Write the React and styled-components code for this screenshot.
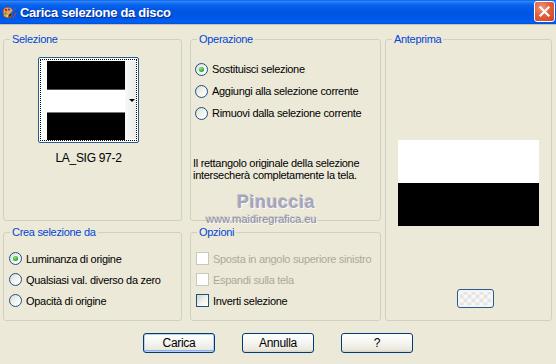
import React from "react";
import styled, { createGlobalStyle } from "styled-components";

const Global = createGlobalStyle`
  html, body { margin: 0; padding: 0; background: #ece9d8; }
  body { font-family: "Liberation Sans", Arial, sans-serif; font-size: 11px; color: #000; }
  * { box-sizing: border-box; }
`;

const Window = styled.div`
  width: 556px;
  height: 364px;
  overflow: hidden;
  background: #ece9d8;
  display: flex;
  flex-direction: column;
`;

const TitleBar = styled.div`
  height: 25px;
  flex: none;
  display: flex;
  align-items: center;
  padding: 0 1px 0 1px;
  background: linear-gradient(
    to bottom,
    #0a5fe9 0%,
    #2f86f8 6%,
    #1a73f4 12%,
    #0760ea 22%,
    #0158e4 40%,
    #0055e2 60%,
    #0057e8 78%,
    #0060f2 90%,
    #0052d8 100%
  );
  border-bottom: 1px solid #c8c4b4;
`;

const AppIcon = styled.svg`
  width: 16px;
  height: 16px;
  flex: none;
  margin-top: 1px;
`;

const Title = styled.div`
  margin-left: 3px;
  flex: 1;
  color: #fff;
  font-family: "Liberation Sans", Arial, sans-serif;
  font-weight: bold;
  font-size: 13px;
  letter-spacing: -0.3px;
  text-shadow: 1px 1px 0 #0a2a8a;
`;

const CloseBtn = styled.div`
  width: 21px;
  height: 21px;
  flex: none;
  border: 1px solid #fff;
  border-radius: 3px;
  background: radial-gradient(circle at 35% 30%, #f0957a 0%, #e3603c 45%, #cc4420 100%);
  display: flex;
  align-items: center;
  justify-content: center;
  margin-top: -1px;
`;

const Body = styled.div`
  flex: 1;
  padding: 8px 0 0 3px;
  display: flex;
  flex-direction: column;
`;

const Groups = styled.div`
  display: grid;
  grid-template-columns: 179px 8px 191px 4px 167px;
  grid-template-rows: 188px 95px;
  row-gap: 5px;
  grid-template-areas:
    "sel . op . prev"
    "crea . opz . prev";
`;

const Group = styled.fieldset`
  grid-area: ${(p) => p.$area};
  margin: 0;
  padding: 0;
  min-width: 0;
  border: 1px solid #d0d0bf;
  border-radius: 3px;
  position: relative;
  display: flex;
  flex-direction: column;
`;

const Legend = styled.legend`
  margin-left: 6px;
  padding: 0 2px;
  color: #0046d5;
  font-size: 11px;
  line-height: 13px;
  letter-spacing: -0.3px;
`;

const SelContent = styled.div`
  padding: 11px 0 0 34px;
  display: flex;
  flex-direction: column;
  align-items: flex-start;
`;

const Thumb = styled.div`
  width: 101px;
  height: 86px;
  border: 1px solid #2a5a8e;
  border-radius: 2px;
  background: #fff;
  padding: 1px;
  display: flex;
`;

const Dotted = styled.div`
  flex: 1;
  border: 1px dotted #000;
  display: flex;
  padding: 1px 0 1px 6px;
`;

const Bars = styled.div`
  width: 78px;
  display: flex;
  flex-direction: column;
`;

const Bar = styled.div`
  height: ${(p) => p.$h}px;
  background: ${(p) => p.$c};
  flex: none;
`;

const DropStrip = styled.div`
  flex: 1;
  background: linear-gradient(to right, #f8f8f8, #ececec);
  display: flex;
  align-items: center;
  justify-content: flex-end;
  padding-right: 1px;
`;

const Arrow = styled.div`
  width: 0;
  height: 0;
  border-left: 3px solid transparent;
  border-right: 3px solid transparent;
  border-top: 3px solid #000;
`;

const ThumbLabel = styled.div`
  width: 101px;
  margin-top: 9px;
  text-align: center;
  font-size: 12px;
  line-height: 13px;
  letter-spacing: -0.3px;
`;

const OptList = styled.div`
  padding: ${(p) => p.$pt}px 0 0 ${(p) => p.$pl}px;
  display: flex;
  flex-direction: column;
`;

const OptRow = styled.div`
  height: ${(p) => p.$h}px;
  display: flex;
  align-items: center;
  gap: 4px;
  letter-spacing: -0.3px;
  color: ${(p) => (p.$disabled ? "#aca899" : "#000")};
  white-space: nowrap;
`;

const Radio = styled.span`
  width: 13px;
  height: 13px;
  flex: none;
  border-radius: 50%;
  border: 1px solid #1c5180;
  background: linear-gradient(135deg, #dcdcd5 0%, #f4f4f0 55%, #ffffff 100%);
  display: flex;
  align-items: center;
  justify-content: center;
  &::after {
    content: "";
    display: ${(p) => (p.$checked ? "block" : "none")};
    width: 5px;
    height: 5px;
    border-radius: 50%;
    background: radial-gradient(circle at 40% 35%, #8de88d 0%, #2fb52f 55%, #1a8a1a 100%);
  }
`;

const Check = styled.span`
  width: 13px;
  height: 13px;
  flex: none;
  border: 1px solid ${(p) => (p.$disabled ? "#cac8bb" : "#1c5180")};
  background: ${(p) =>
    p.$disabled ? "#fff" : "linear-gradient(135deg, #d4d4cc 0%, #f2f2ee 55%, #ffffff 100%)"};
`;

const Desc = styled.div`
  margin-top: 33px;
  padding-left: 2px;
  line-height: 12px;
  letter-spacing: -0.3px;
`;

const Watermark = styled.div`
  position: absolute;
  left: ${(p) => p.$x}px;
  top: ${(p) => p.$y}px;
  font-family: "Liberation Sans", Arial, sans-serif;
  font-size: ${(p) => p.$size}px;
  font-weight: ${(p) => p.$weight};
  line-height: 1.1;
  color: ${(p) => p.$color};
  letter-spacing: ${(p) => p.$ls}px;
  text-shadow: 1px 1px 0 rgba(255, 255, 255, 0.8), -1px -1px 0 rgba(120, 120, 150, 0.35);
  pointer-events: none;
  white-space: nowrap;
`;

const PrevContent = styled.div`
  display: flex;
  flex-direction: column;
  align-items: center;
  padding-top: 94px;
`;

const Preview = styled.div`
  width: 141px;
  height: 86px;
  display: flex;
  flex-direction: column;
`;

const PatternBtn = styled.div`
  margin-top: 63px;
  margin-left: 14px;
  width: 37px;
  height: 19px;
  border: 1px solid #2a5a8e;
  border-radius: 3px;
  background:
    repeating-conic-gradient(#e4e4e4 0% 25%, #f8f8f8 0% 50%) 50% / 8px 8px;
  box-shadow: inset 0 0 0 2px #f4f4f0;
`;

const ButtonRow = styled.div`
  margin-top: 12px;
  margin-left: -3px;
  display: flex;
  justify-content: center;
  gap: 27px;
`;

const Button = styled.div`
  width: 72px;
  height: 20px;
  border: 1px solid #003c74;
  border-radius: 3px;
  background: linear-gradient(to bottom, #ffffff 0%, #f4f4f0 50%, #ebe9e0 85%, #d8d4c8 100%);
  box-shadow: ${(p) => (p.$default ? "inset 0 0 0 1px #b6cff4, inset 0 -1px 0 1px #8fb0e8" : "none")};
  display: flex;
  align-items: center;
  justify-content: center;
  font-size: 12px;
  letter-spacing: -0.3px;
`;

function PaletteIcon() {
  return (
    <AppIcon viewBox="0 0 16 16">
      <path d="M2 6 C2 2.5 6 1.5 9 2.5 C12 3.5 12.5 6 11 7.5 C10 8.5 11.5 9.5 10.5 11 C9 13.5 3.5 13.5 2.5 10.5 C2 9 2 7.5 2 6 Z" fill="#e0a060" stroke="#8a4a1a" strokeWidth="0.8" />
      <circle cx="5" cy="5" r="1.2" fill="#d02020" />
      <circle cx="8" cy="4.5" r="1.1" fill="#2050e0" />
      <circle cx="4.5" cy="8.5" r="1.1" fill="#30a030" />
      <circle cx="6.5" cy="11" r="1" fill="#f0e020" />
      <path d="M9 10 L14.5 3.5" stroke="#3060c0" strokeWidth="1.6" strokeLinecap="round" />
      <path d="M8.2 11 L9.5 9.6" stroke="#402010" strokeWidth="1.8" strokeLinecap="round" />
      <path d="M12 13 L15 8" stroke="#c04040" strokeWidth="1.2" strokeLinecap="round" />
    </AppIcon>
  );
}

function RadioOpt({ checked, children, h }) {
  return (
    <OptRow $h={h}>
      <Radio $checked={checked} />
      <span>{children}</span>
    </OptRow>
  );
}

function CheckOpt({ disabled, children, h }) {
  return (
    <OptRow $h={h} $disabled={disabled}>
      <Check $disabled={disabled} />
      <span>{children}</span>
    </OptRow>
  );
}

export default function App() {
  return (
    <>
      <Global />
      <Window>
        <TitleBar>
          <PaletteIcon />
          <Title>Carica selezione da disco</Title>
          <CloseBtn>
            <svg width="13" height="13" viewBox="0 0 13 13">
              <path d="M2.5 2.5 L10.5 10.5 M10.5 2.5 L2.5 10.5" stroke="#fff" strokeWidth="2.2" strokeLinecap="square" />
            </svg>
          </CloseBtn>
        </TitleBar>
        <Body>
          <Groups>
            <Group $area="sel">
              <Legend>Selezione</Legend>
              <SelContent>
                <Thumb>
                  <Dotted>
                    <Bars>
                      <Bar $h={28} $c="#000" />
                      <Bar $h={1} $c="#555" />
                      <Bar $h={22} $c="#fff" />
                      <Bar $h={1} $c="#777" />
                      <Bar $h={27} $c="#000" />
                    </Bars>
                    <DropStrip>
                      <Arrow />
                    </DropStrip>
                  </Dotted>
                </Thumb>
                <ThumbLabel>LA_SIG 97-2</ThumbLabel>
              </SelContent>
            </Group>

            <Group $area="op">
              <Legend>Operazione</Legend>
              <OptList $pt={12} $pl={4}>
                <RadioOpt h={22} checked>Sostituisci selezione</RadioOpt>
                <RadioOpt h={22}>Aggiungi alla selezione corrente</RadioOpt>
                <RadioOpt h={22}>Rimuovi dalla selezione corrente</RadioOpt>
              </OptList>
              <Desc>
                Il rettangolo originale della selezione
                <br />
                intersecherà completamente la tela.
              </Desc>
              <Watermark $x={46} $y={147} $size={18} $weight="bold" $color="#a4a4bc" $ls={0.5}>
                Pinuccia
              </Watermark>
              <Watermark $x={15} $y={167} $size={11} $weight="normal" $color="#8c8ca4" $ls={0}>
                www.maidiregrafica.eu
              </Watermark>
            </Group>

            <Group $area="prev">
              <Legend>Anteprima</Legend>
              <PrevContent>
                <Preview>
                  <Bar $h={43} $c="#fff" />
                  <Bar $h={43} $c="#000" />
                </Preview>
                <PatternBtn />
              </PrevContent>
            </Group>

            <Group $area="crea">
              <Legend>Crea selezione da</Legend>
              <OptList $pt={9} $pl={5}>
                <RadioOpt h={21} checked>Luminanza di origine</RadioOpt>
                <RadioOpt h={21}>Qualsiasi val. diverso da zero</RadioOpt>
                <RadioOpt h={21}>Opacità di origine</RadioOpt>
              </OptList>
            </Group>

            <Group $area="opz">
              <Legend>Opzioni</Legend>
              <OptList $pt={9} $pl={5}>
                <CheckOpt h={21} disabled>Sposta in angolo superiore sinistro</CheckOpt>
                <CheckOpt h={21} disabled>Espandi sulla tela</CheckOpt>
                <CheckOpt h={21}>Inverti selezione</CheckOpt>
              </OptList>
            </Group>
          </Groups>
          <ButtonRow>
            <Button $default>Carica</Button>
            <Button>Annulla</Button>
            <Button>?</Button>
          </ButtonRow>
        </Body>
      </Window>
    </>
  );
}
